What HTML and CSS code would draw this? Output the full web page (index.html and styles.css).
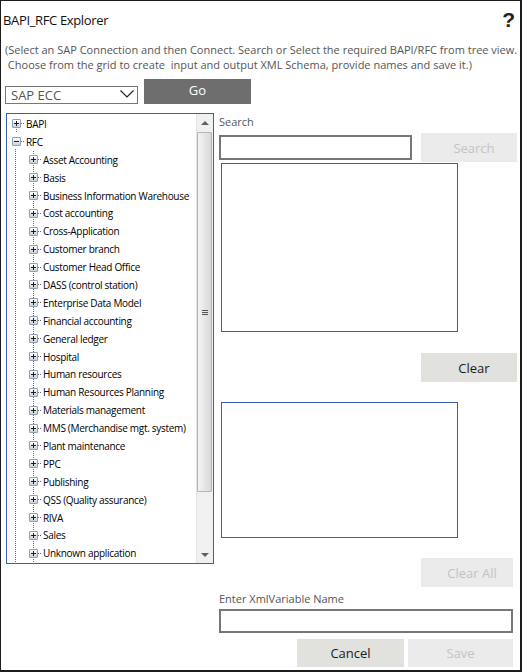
FILE: index.html
```html
<!DOCTYPE html>
<html lang="en">
<head>
    <meta charset="UTF-8">
    <title>BAPI_RFC Explorer</title>
    <link rel="stylesheet" href="styles.css">
</head>
<body>
    <div class="window">
        <div class="title-bar">
            <div class="title">BAPI_RFC Explorer</div>
            <div class="help">?</div>
        </div>

        <p class="hint">(Select an SAP Connection and then Connect. Search or Select the required BAPI/RFC from tree view.<br>&nbsp;Choose from the grid to create &nbsp;input and output XML Schema, provide names and save it.)</p>

        <div class="connect-row">
            <div class="combo">
                <span class="combo-text">SAP ECC</span>
                <svg class="combo-arrow" width="14" height="8" viewBox="0 0 14 8"><path d="M0.5 0.5 L7 7 L13.5 0.5" fill="none" stroke="#222" stroke-width="1.2"/></svg>
            </div>
            <button class="btn btn-dark">Go</button>
        </div>

        <div class="main">
            <div class="tree-box">
                <div class="tree">
                    <div class="node root first"><span class="exp"></span><span class="dots"></span>BAPI</div>
                    <div class="node root"><span class="exp open"></span><span class="dots"></span>RFC</div>
                    <div class="children">
                        <div class="node"><span class="exp"></span><span class="dots"></span>Asset Accounting</div>
                        <div class="node"><span class="exp"></span><span class="dots"></span>Basis</div>
                        <div class="node"><span class="exp"></span><span class="dots"></span>Business Information Warehouse</div>
                        <div class="node"><span class="exp"></span><span class="dots"></span>Cost accounting</div>
                        <div class="node"><span class="exp"></span><span class="dots"></span>Cross-Application</div>
                        <div class="node"><span class="exp"></span><span class="dots"></span>Customer branch</div>
                        <div class="node"><span class="exp"></span><span class="dots"></span>Customer Head Office</div>
                        <div class="node"><span class="exp"></span><span class="dots"></span>DASS (control station)</div>
                        <div class="node"><span class="exp"></span><span class="dots"></span>Enterprise Data Model</div>
                        <div class="node"><span class="exp"></span><span class="dots"></span>Financial accounting</div>
                        <div class="node"><span class="exp"></span><span class="dots"></span>General ledger</div>
                        <div class="node"><span class="exp"></span><span class="dots"></span>Hospital</div>
                        <div class="node"><span class="exp"></span><span class="dots"></span>Human resources</div>
                        <div class="node"><span class="exp"></span><span class="dots"></span>Human Resources Planning</div>
                        <div class="node"><span class="exp"></span><span class="dots"></span>Materials management</div>
                        <div class="node"><span class="exp"></span><span class="dots"></span>MMS (Merchandise mgt. system)</div>
                        <div class="node"><span class="exp"></span><span class="dots"></span>Plant maintenance</div>
                        <div class="node"><span class="exp"></span><span class="dots"></span>PPC</div>
                        <div class="node"><span class="exp"></span><span class="dots"></span>Publishing</div>
                        <div class="node"><span class="exp"></span><span class="dots"></span>QSS (Quality assurance)</div>
                        <div class="node"><span class="exp"></span><span class="dots"></span>RIVA</div>
                        <div class="node"><span class="exp"></span><span class="dots"></span>Sales</div>
                        <div class="node"><span class="exp"></span><span class="dots"></span>Unknown application</div>
                    </div>
                </div>
                <div class="scrollbar">
                    <div class="sb-arrow up"></div>
                    <div class="sb-track">
                        <div class="sb-thumb"><span class="grip"></span></div>
                    </div>
                    <div class="sb-arrow down"></div>
                </div>
            </div>

            <div class="side">
                <div class="label">Search</div>
                <div class="search-row">
                    <div class="textbox search-input"></div>
                    <button class="btn btn-off search-btn">Search</button>
                </div>
                <div class="listbox list-top"></div>
                <button class="btn btn-light clear-btn">Clear</button>
                <div class="listbox list-bottom"></div>
                <button class="btn btn-off clear-all-btn">Clear All</button>
                <div class="label var-label">Enter XmlVariable Name</div>
                <div class="textbox var-input"></div>
                <div class="footer">
                    <button class="btn btn-light cancel-btn">Cancel</button>
                    <button class="btn btn-off save-btn">Save</button>
                </div>
            </div>
        </div>
    </div>
</body>
</html>
```

FILE: styles.css
```css
* {
    box-sizing: border-box;
}

body {
    margin: 0;
    background: #fff;
    font-family: "Open Sans", "Noto Sans", sans-serif;
}

.window {
    width: 522px;
    height: 672px;
    border-style: solid;
    border-color: #1c1c1c;
    border-width: 1px 2px 2px 1px;
    background: #fff;
    overflow: hidden;
}

.title-bar {
    display: flex;
    justify-content: space-between;
    align-items: center;
    height: 24px;
    margin-top: 7px;
    padding: 0 5px 0 2px;
}

.title {
    font-size: 13px;
    letter-spacing: -0.35px;
    color: #111;
}

.help {
    font-family: "Liberation Sans", sans-serif;
    font-weight: bold;
    font-size: 21px;
    color: #222;
}

.hint {
    margin: 10px 0 0 0;
    padding-left: 4px;
    font-size: 11px;
    line-height: 15px;
    color: #555;
    white-space: nowrap;
}

.connect-row {
    display: flex;
    align-items: flex-end;
    gap: 6px;
    margin-top: 7px;
    padding-left: 4px;
}

.combo {
    width: 133px;
    height: 18px;
    border: 1px solid #777;
    display: flex;
    align-items: flex-end;
    justify-content: space-between;
    padding: 0 3px 0 5px;
    overflow: hidden;
}

.combo-text {
    font-size: 13px;
    line-height: 15px;
    color: #555;
}

.combo-arrow {
    align-self: center;
    margin-top: -3px;
}

.btn {
    border: none;
    padding: 0 0 0 10px;
    font-family: "Open Sans", "Noto Sans", sans-serif;
    font-size: 13px;
    height: 29px;
}

.btn-dark {
    width: 107px;
    height: 25px;
    padding: 0 0 4px 0;
    background: #6e6e6e;
    color: #fff;
}

.btn-light {
    background: #e1e1dd;
    color: #1a1a1a;
}

.btn-off {
    background: #ebebeb;
    color: #c3c3c3;
}

.main {
    display: grid;
    grid-template-columns: 208px 298px;
    column-gap: 5px;
    margin-top: 9px;
    padding-left: 5px;
}

/* tree view */

.tree-box {
    height: 451px;
    border: 1px solid #3b5fae;
    display: flex;
    overflow: hidden;
}

.tree {
    flex: 1;
    min-width: 0;
    overflow: hidden;
    padding-top: 1px;
    font-size: 10px;
    letter-spacing: -0.3px;
    color: #000;
    background-image: repeating-linear-gradient(to bottom, #666 0 1px, transparent 1px 2px);
    background-size: 1px 100%;
    background-position: 8px 35px;
    background-repeat: no-repeat;
}

.node {
    display: flex;
    align-items: center;
    height: 17.9px;
    padding-left: 5px;
    white-space: nowrap;
}

.root.first {
    background-image: repeating-linear-gradient(to bottom, #666 0 1px, transparent 1px 2px);
    background-size: 1px 9px;
    background-position: 9px 14px;
    background-repeat: no-repeat;
}

.children {
    background-image: repeating-linear-gradient(to bottom, #666 0 1px, transparent 1px 2px);
    background-size: 1px 100%;
    background-position: 26px 0;
    background-repeat: no-repeat;
}

.children .node {
    padding-left: 22px;
}

.exp {
    width: 9px;
    height: 9px;
    border: 1px solid #90a0b4;
    border-radius: 1px;
    background:
        linear-gradient(#1e1e1e, #1e1e1e) center / 5px 1px no-repeat,
        linear-gradient(#1e1e1e, #1e1e1e) center / 1px 5px no-repeat,
        linear-gradient(#fdfdfd, #c9d2dc);
    flex: none;
}

.exp.open {
    background:
        linear-gradient(#1e1e1e, #1e1e1e) center / 5px 1px no-repeat,
        linear-gradient(#fdfdfd, #c9d2dc);
}

.dots {
    width: 4px;
    height: 1px;
    margin-right: 1px;
    background: repeating-linear-gradient(to right, #666 0 1px, transparent 1px 2px);
    flex: none;
}

.scrollbar {
    flex: none;
    width: 17px;
    background: #f0f0f0;
    border-left: 1px solid #e4e4e4;
    display: flex;
    flex-direction: column;
}

.sb-arrow {
    height: 17px;
    display: flex;
    justify-content: center;
    align-items: center;
}

.sb-arrow::before {
    content: "";
    border-left: 4px solid transparent;
    border-right: 4px solid transparent;
}

.sb-arrow.up::before {
    border-bottom: 4px solid #606060;
}

.sb-arrow.down::before {
    border-top: 4px solid #606060;
}

.sb-track {
    flex: 1;
    padding: 1px 1px 0 0;
}

.sb-thumb {
    height: 360px;
    border: 1px solid #b4b4b4;
    border-radius: 1px;
    background: linear-gradient(to right, #f4f4f4, #e6e6e6 50%, #d8d8d8);
    display: flex;
    justify-content: center;
    align-items: center;
}

.grip {
    width: 6px;
    height: 5px;
    border-top: 1px solid #555;
    border-bottom: 1px solid #555;
    background: linear-gradient(#555, #555) center / 6px 1px no-repeat;
}

/* right side */

.side {
    display: flex;
    flex-direction: column;
    padding-top: 1px;
}

.label {
    font-size: 11px;
    line-height: 16px;
    color: #555;
}

.search-row {
    display: flex;
    align-items: center;
    gap: 9px;
    margin-top: 3px;
}

.textbox {
    border: 2px solid #777;
    background: #fff;
}

.search-input {
    width: 193px;
    height: 25px;
}

.search-btn {
    width: 96px;
}

.listbox {
    width: 237px;
    margin-left: 2px;
    border: 1px solid #3b5fae;
}

.list-top {
    height: 169px;
    margin-top: 1px;
}

.clear-btn {
    width: 96px;
    margin-top: 21px;
    align-self: flex-end;
}

.list-bottom {
    height: 136px;
    margin-top: 20px;
}

.clear-all-btn {
    width: 92px;
    margin: 20px 4px 0 0;
    align-self: flex-end;
}

.var-label {
    margin-top: 4px;
    line-height: 15px;
}

.var-input {
    width: 294px;
    height: 24px;
    margin-top: 3px;
}

.footer {
    display: flex;
    justify-content: flex-end;
    gap: 4px;
    margin: 6px 4px 0 0;
}

.cancel-btn {
    width: 107px;
    height: 28px;
    padding: 0;
}

.save-btn {
    width: 105px;
    height: 28px;
    padding: 0;
}
```
